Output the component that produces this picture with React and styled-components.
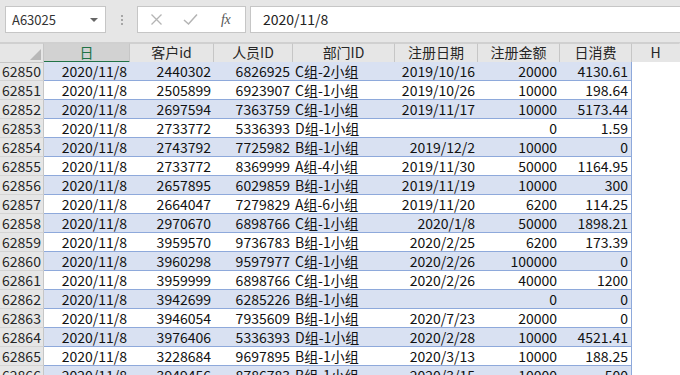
import styled, { createGlobalStyle } from "styled-components";

const COLS = "44px 86px 84px 79px 102px 83px 82px 72px 1fr";

const headers = ["日", "客户id", "人员ID", "部门ID", "注册日期", "注册金额", "日消费", "H"];

const rows = [
  [62850, "2020/11/8", "2440302", "6826925", "C组-2小组", "2019/10/16", "20000", "4130.61"],
  [62851, "2020/11/8", "2505899", "6923907", "C组-1小组", "2019/10/26", "10000", "198.64"],
  [62852, "2020/11/8", "2697594", "7363759", "C组-1小组", "2019/11/17", "10000", "5173.44"],
  [62853, "2020/11/8", "2733772", "5336393", "D组-1小组", "", "0", "1.59"],
  [62854, "2020/11/8", "2743792", "7725982", "B组-1小组", "2019/12/2", "10000", "0"],
  [62855, "2020/11/8", "2733772", "8369999", "A组-4小组", "2019/11/30", "50000", "1164.95"],
  [62856, "2020/11/8", "2657895", "6029859", "B组-1小组", "2019/11/19", "10000", "300"],
  [62857, "2020/11/8", "2664047", "7279829", "A组-6小组", "2019/11/20", "6200", "114.25"],
  [62858, "2020/11/8", "2970670", "6898766", "C组-1小组", "2020/1/8", "50000", "1898.21"],
  [62859, "2020/11/8", "3959570", "9736783", "B组-1小组", "2020/2/25", "6200", "173.39"],
  [62860, "2020/11/8", "3960298", "9597977", "C组-1小组", "2020/2/26", "100000", "0"],
  [62861, "2020/11/8", "3959999", "6898766", "C组-1小组", "2020/2/26", "40000", "1200"],
  [62862, "2020/11/8", "3942699", "6285226", "B组-1小组", "", "0", "0"],
  [62863, "2020/11/8", "3946054", "7935609", "B组-1小组", "2020/7/23", "20000", "0"],
  [62864, "2020/11/8", "3976406", "5336393", "D组-1小组", "2020/2/28", "10000", "4521.41"],
  [62865, "2020/11/8", "3228684", "9697895", "B组-1小组", "2020/3/13", "10000", "188.25"],
  [62866, "2020/11/8", "3949456", "8786783", "B组-1小组", "2020/3/15", "10000", "500"],
];

const GlobalStyle = createGlobalStyle`
  html, body {
    margin: 0;
    padding: 0;
    background: #fff;
    overflow: hidden;
  }
  body {
    font-family: "Noto Sans CJK SC", "Noto Sans", sans-serif;
    color: #1a1a1a;
  }
`;

const Page = styled.div`
  width: 680px;
  height: 375px;
  overflow: hidden;
  background: #fff;
`;

const FormulaBar = styled.div`
  display: flex;
  align-items: flex-start;
  height: 43px;
  box-sizing: border-box;
  padding: 6px 0 0 5px;
  background: #e6e6e6;
  border-bottom: 1px solid #d0d0d0;
`;

const NameBox = styled.div`
  position: relative;
  width: 101px;
  height: 27px;
  box-sizing: border-box;
  background: #fff;
  border: 1px solid #c6c6c6;
  font-size: 13px;
  line-height: 25px;
  padding-left: 6px;
  color: #333;
`;

const Caret = styled.span`
  position: absolute;
  right: 7px;
  top: 11px;
  width: 0;
  height: 0;
  border-left: 4px solid transparent;
  border-right: 4px solid transparent;
  border-top: 4px solid #666;
`;

const Grip = styled.div`
  width: 31px;
  height: 27px;
  display: flex;
  flex-direction: column;
  align-items: center;
  justify-content: center;
  gap: 2px;

  span {
    width: 2px;
    height: 2px;
    background: #a6a6a6;
  }
`;

const ButtonBox = styled.div`
  display: flex;
  align-items: center;
  width: 109px;
  height: 27px;
  box-sizing: border-box;
  background: #fff;
  border: 1px solid #c6c6c6;
  padding-left: 12px;
  gap: 20px;
`;

const Fx = styled.span`
  font-family: "Liberation Serif", serif;
  font-style: italic;
  font-size: 14px;
  color: #555;
  margin-left: 3px;
  letter-spacing: -0.5px;
`;

const FormulaInput = styled.div`
  flex: 1;
  height: 27px;
  margin-left: 4px;
  box-sizing: border-box;
  background: #fff;
  border: 1px solid #c6c6c6;
  border-right: none;
  font-size: 14px;
  line-height: 25px;
  padding-left: 12px;
  color: #222;
`;

const Row = styled.div`
  display: grid;
  grid-template-columns: ${COLS};
  height: 19px;
`;

const Corner = styled.div`
  position: relative;
  background: #e6e6e6;
  border-right: 1px solid #c6c6c6;
  border-bottom: 1px solid #c6c6c6;
  border-top: 1px solid #d0d0d0;
  box-sizing: border-box;

  &::after {
    content: "";
    position: absolute;
    right: 2px;
    bottom: 2px;
    width: 0;
    height: 0;
    border-left: 11px solid transparent;
    border-bottom: 11px solid #b8b8b8;
  }
`;

const ColHead = styled.div`
  box-sizing: border-box;
  background: ${(p) => (p.$active ? "#d2d2d2" : "#e6e6e6")};
  color: ${(p) => (p.$active ? "#217346" : "#262626")};
  border-top: 1px solid #d0d0d0;
  border-right: 1px solid ${(p) => (p.$last ? "transparent" : "#c6c6c6")};
  border-bottom: ${(p) => (p.$active ? "2px solid #217346" : "1px solid #c6c6c6")};
  font-size: 14px;
  line-height: 17px;
  text-align: center;
  white-space: nowrap;
`;

const RowHead = styled.div`
  box-sizing: border-box;
  background: #e6e6e6;
  border-right: 1px solid #c6c6c6;
  border-bottom: 1px solid #d4d4d4;
  font-size: 14px;
  line-height: 18px;
  text-align: center;
  color: #262626;
`;

const Cell = styled.div`
  box-sizing: border-box;
  background: ${(p) => (p.$band ? "#d9e1f2" : "#fff")};
  border-bottom: 1px solid #8ea9db;
  border-right: ${(p) => (p.$edge ? "1px solid #8ea9db" : "none")};
  font-size: 14px;
  line-height: 18px;
  padding: 0 3px 0 2px;
  text-align: ${(p) => (p.$left ? "left" : "right")};
  white-space: nowrap;
  overflow: hidden;
  color: #111;
`;

const Blank = styled.div`
  background: #fff;
`;

function CrossIcon() {
  return (
    <svg width="13" height="13" viewBox="0 0 13 13">
      <path d="M1.5 1.5 L11.5 11.5 M11.5 1.5 L1.5 11.5" stroke="#b4b4b4" strokeWidth="1.3" fill="none" />
    </svg>
  );
}

function CheckIcon() {
  return (
    <svg width="15" height="13" viewBox="0 0 15 13">
      <path d="M1 7 L5.5 11 L14 1.5" stroke="#b4b4b4" strokeWidth="1.5" fill="none" />
    </svg>
  );
}

export default function App() {
  return (
    <Page>
      <GlobalStyle />
      <FormulaBar>
        <NameBox>
          A63025
          <Caret />
        </NameBox>
        <Grip>
          <span />
          <span />
          <span />
        </Grip>
        <ButtonBox>
          <CrossIcon />
          <CheckIcon />
          <Fx>fx</Fx>
        </ButtonBox>
        <FormulaInput>2020/11/8</FormulaInput>
      </FormulaBar>

      <Row>
        <Corner />
        {headers.map((h, i) => (
          <ColHead key={h} $active={i === 0} $last={i === headers.length - 1}>
            {h}
          </ColHead>
        ))}
      </Row>

      {rows.map((r, i) => {
        const band = i % 2 === 0;
        return (
          <Row key={r[0]}>
            <RowHead>{r[0]}</RowHead>
            {r.slice(1).map((v, j) => (
              <Cell key={j} $band={band} $left={j === 3} $edge={j === 6}>
                {v}
              </Cell>
            ))}
            <Blank />
          </Row>
        );
      })}
    </Page>
  );
}
